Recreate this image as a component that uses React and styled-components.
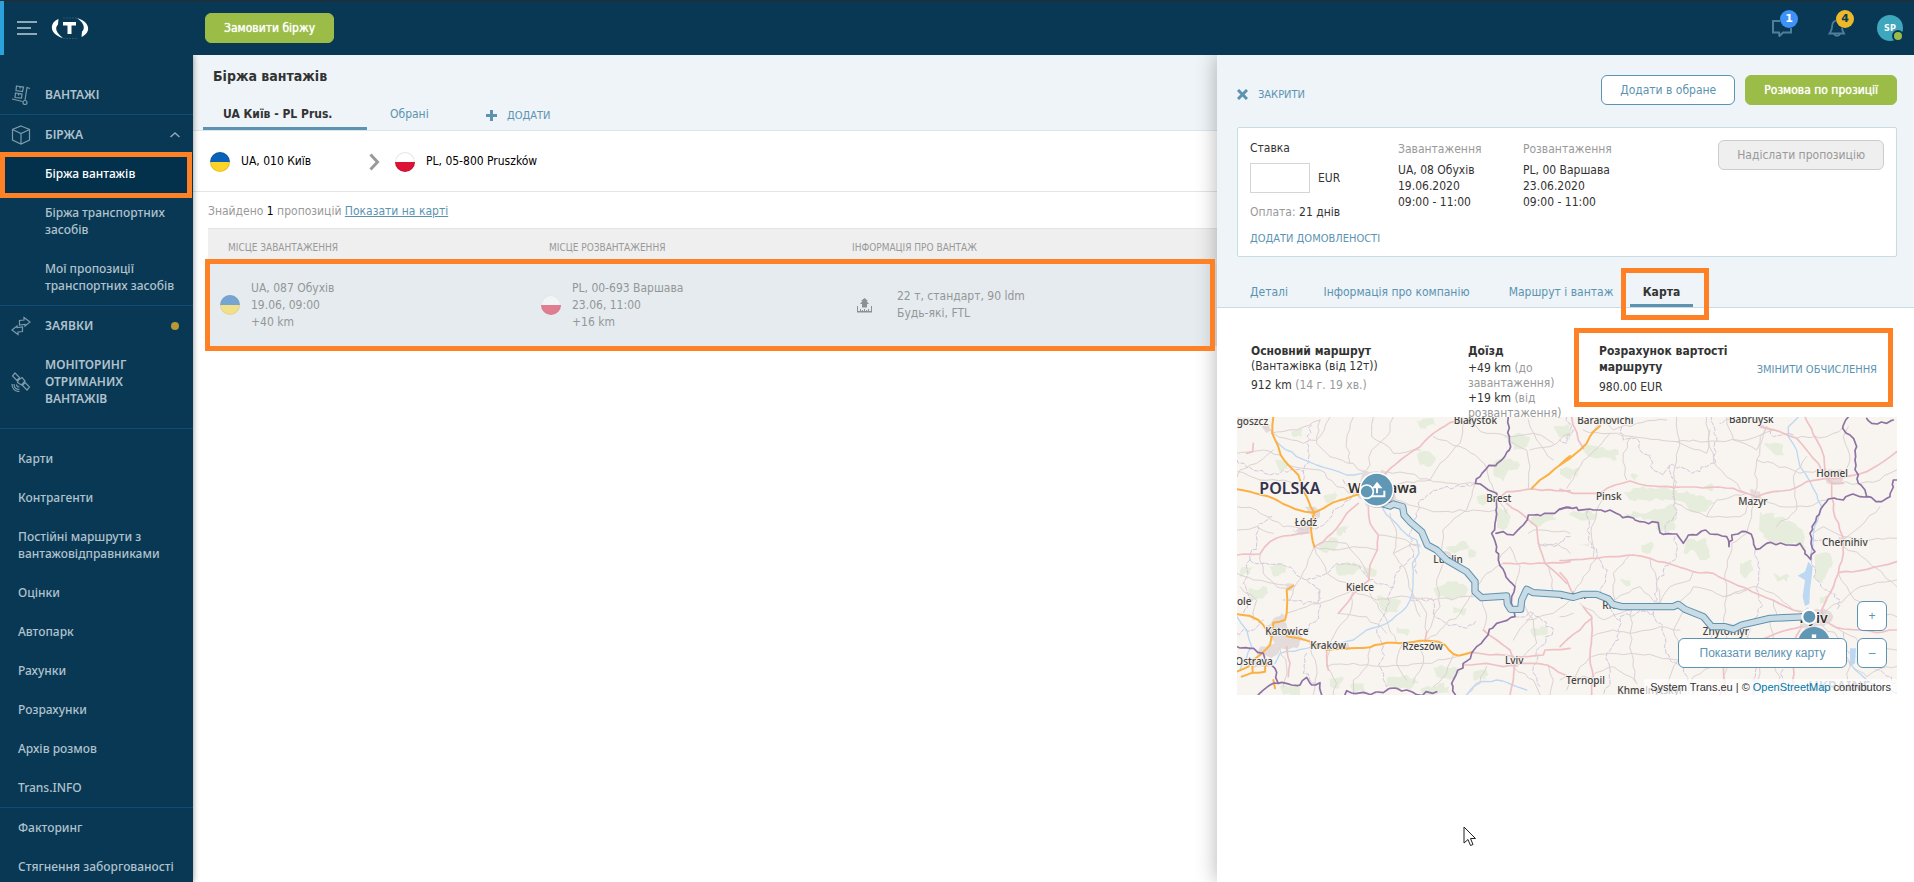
import React from "react";
import styled, { createGlobalStyle, css } from "styled-components";

const UI_FONT = '"DejaVu Sans Condensed", "Noto Sans", sans-serif';
const NAV_FONT = '"Noto Sans", sans-serif';
const ARIAL = '"Liberation Sans", sans-serif';

const color = {
  navy: "#093855",
  navyDark: "#03304a",
  navyLine: "#0f4d75",
  pale: "#eef4f7",
  line: "#c9dce6",
  blue: "#5b93b1",
  green: "#9bbd47",
  orange: "#ff8126",
  text: "#333333",
  muted: "#999999",
};

const GlobalStyle = createGlobalStyle`
  *, *::before, *::after { box-sizing: border-box; }
  html, body { margin: 0; background: #ffffff; }
  body { font: 12px/17px ${UI_FONT}; color: ${color.text}; }
  button, input { font: inherit; color: inherit; margin: 0; }
  button { border: 0; padding: 0; background: none; cursor: pointer; }
  ul, dl, dd, h1, h2, p { margin: 0; padding: 0; }
  ul { list-style: none; }
  svg { display: block; flex: none; }
`;

const highlight = (inset) => css`
  position: relative;
  &::after {
    content: "";
    position: absolute;
    inset: ${inset};
    border: 5px solid ${color.orange};
    pointer-events: none;
    z-index: 3;
  }
`;

/* ---------- frame ---------- */

const Page = styled.div`
  display: flex;
  flex-direction: column;
  height: 100vh;
  overflow: hidden;
`;

const TopBar = styled.header`
  display: flex;
  align-items: center;
  flex: none;
  height: 55px;
  padding-right: 11px;
  border-top: 1px solid #2b2b2b;
  background: ${color.navy};
  position: relative;
  z-index: 4;
`;

const Brand = styled.div`
  display: flex;
  align-items: center;
  align-self: stretch;
  gap: 14px;
  width: 205px;
  padding-left: 13px;
  border-left: 4px solid #2ba2de;
`;

const Spacer = styled.div`
  flex: 1;
`;

const TopIcons = styled.div`
  display: flex;
  align-items: center;
`;

const TopIconButton = styled.button`
  position: relative;
  width: 20px;
  height: 20px;
  margin-right: ${(p) => p.$gap}px;
`;

const Badge = styled.span`
  position: absolute;
  left: 8px;
  top: -8px;
  width: 18px;
  height: 18px;
  border-radius: 50%;
  background: ${(p) => p.$bg};
  color: ${(p) => p.$fg};
  font: bold 11px/18px "DejaVu Sans", sans-serif;
  text-align: center;
`;

const Avatar = styled.button`
  position: relative;
  width: 26px;
  height: 26px;
  border-radius: 50%;
  background: #3ea6bd;
  color: #ffffff;
  font-size: 9px;
  font-weight: bold;
  line-height: 26px;
  text-align: center;
  &::after {
    content: "";
    position: absolute;
    right: -1px;
    bottom: -1px;
    width: 12px;
    height: 12px;
    border: 2px solid ${color.navy};
    border-radius: 50%;
    background: ${color.green};
  }
`;

const Columns = styled.div`
  display: flex;
  flex: 1;
  min-height: 0;
`;

/* ---------- buttons ---------- */

const Button = styled.button`
  height: 30px;
  padding: 0 18px;
  border-radius: 6px;
  border: 1px solid ${color.green};
  background: ${color.green};
  color: #ffffff;
  line-height: 28px;
  white-space: nowrap;
  text-shadow: 0 0 1px #ffffff;
  ${(p) =>
    p.$kind === "outline" &&
    css`
      border-color: ${color.blue};
      background: #ffffff;
      color: ${color.blue};
      text-shadow: none;
    `}
  &:disabled {
    border-color: #cccccc;
    background: #efefef;
    color: ${color.muted};
    text-shadow: none;
  }
`;

const TextLink = styled.a`
  color: ${color.blue};
  text-decoration: ${(p) => (p.$underline ? "underline" : "none")};
  font-size: ${(p) => (p.$small ? 11 : 12)}px;
  white-space: nowrap;
`;

/* ---------- sidebar ---------- */

const Sidebar = styled.nav`
  flex: none;
  width: 193px;
  padding-top: 20px;
  background: ${color.navy};
  box-shadow: 0 0 6px rgba(0, 0, 0, 0.45);
  position: relative;
  z-index: 2;
`;

const NavSection = styled.ul`
  padding: ${(p) => p.$top ?? 0}px 0 ${(p) => p.$bottom ?? 0}px;
  border-bottom: 1px solid ${(p) => (p.$last ? "transparent" : color.navyLine)};
`;

const NavLink = styled.a`
  display: flex;
  align-items: center;
  padding: 11px 12px 11px ${(p) => p.$indent ?? 18}px;
  color: #b0c2cc;
  font-family: ${NAV_FONT};
  font-weight: ${(p) => (p.$caps ? 600 : 500)};
  text-decoration: none;
  ${(p) =>
    p.$active &&
    css`
      background: ${color.navyDark};
      color: #ffffff;
      ${highlight("-2px 1px -5px 0")}
    `}
`;

const NavIcon = styled.span`
  display: flex;
  align-items: center;
  width: 34px;
  height: 17px;
  margin-left: -7px;
  color: #7b99a9;
`;

const NavText = styled.span`
  flex: 1;
  text-transform: ${(p) => (p.$caps ? "uppercase" : "none")};
`;

const Dot = styled.span`
  width: 8px;
  height: 8px;
  margin-right: 2px;
  border-radius: 50%;
  background: #b79a36;
`;

/* ---------- main ---------- */

const Main = styled.main`
  flex: 1;
  min-width: 0;
  background: #ffffff;
`;

const MainHead = styled.div`
  height: 76px;
  padding: 12px 10px 0;
  border-bottom: 1px solid #dbe6ec;
  background: ${color.pale};
`;

const Title = styled.h1`
  padding-left: 10px;
  font-size: 14px;
  line-height: 18px;
`;

const TabRow = styled.div`
  display: flex;
  margin-top: 12px;
`;

const MainTab = styled.button`
  width: ${(p) => p.$width}px;
  height: 33px;
  padding: 5px 0 0 ${(p) => p.$pad}px;
  border-bottom: 3px solid ${(p) => (p.$active ? color.blue : "transparent")};
  color: ${(p) => (p.$active ? color.text : color.blue)};
  font-weight: ${(p) => (p.$active ? "bold" : "normal")};
  text-align: left;
`;

const AddTab = styled.button`
  display: flex;
  align-items: center;
  gap: 10px;
  height: 33px;
  padding-top: 3px;
  color: ${color.blue};
  font-size: 11px;
  text-transform: uppercase;
`;

const Filter = styled.div`
  display: flex;
  align-items: center;
  height: 61px;
  padding: 1px 0 0 17px;
  border-bottom: 1px solid #e0e5e9;
  color: #000000;
`;

const Flag = styled.span`
  flex: none;
  width: 20px;
  height: 20px;
  margin-right: 11px;
  border-radius: 50%;
  background: linear-gradient(${(p) => p.$top} 50%, ${(p) => p.$bottom} 50%);
  box-shadow: inset 0 0 0 1px rgba(0, 0, 0, 0.1);
  opacity: ${(p) => (p.$faded ? 0.5 : 1)};
`;

const FilterPlace = styled.span`
  display: flex;
  align-items: center;
  min-width: ${(p) => p.$min ?? 0}px;
`;

const Results = styled.section`
  padding: 11px 0 0 15px;
`;

const Found = styled.p`
  color: ${color.muted};
  strong { color: #000000; font-weight: normal; }
`;

const OffersFrame = styled.div`
  margin-top: 8px;
  ${highlight("31px 2px -5px -3px")}
`;

const Offers = styled.table`
  width: 100%;
  border-spacing: 0;
  table-layout: fixed;
`;

const HeadCell = styled.th`
  height: 36px;
  padding: 2px 0 0 20px;
  border-top: 1px solid #dfe5e9;
  background: #efefef;
  color: ${color.muted};
  font-size: 10px;
  font-weight: normal;
  text-align: left;
  text-transform: uppercase;
`;

const Cell = styled.td`
  height: 82px;
  padding: 0 0 0 ${(p) => p.$pad ?? 12}px;
  background: #e5ebee;
  color: #939799;
`;

const CellInner = styled.div`
  display: flex;
  align-items: center;
  gap: ${(p) => p.$gap ?? 0}px;
`;

/* ---------- detail drawer ---------- */

const Drawer = styled.aside`
  flex: none;
  width: 697px;
  background: #ffffff;
  box-shadow: 0 0 20px rgba(0, 0, 0, 0.3);
  position: relative;
  z-index: 1;
`;

const DrawerHead = styled.div`
  padding: 20px 17px 0 20px;
  border-bottom: 1px solid ${color.line};
  background: ${color.pale};
`;

const DrawerActions = styled.div`
  display: flex;
  align-items: center;
  gap: 10px;
`;

const CloseButton = styled.button`
  display: flex;
  align-items: center;
  gap: 10px;
  margin-right: auto;
  padding-top: 8px;
  color: ${color.blue};
  font-size: 11px;
  text-transform: uppercase;
`;

const OfferCard = styled.section`
  display: flex;
  align-items: flex-start;
  height: 130px;
  margin-top: 22px;
  padding: 12px;
  border: 1px solid ${color.line};
  border-radius: 2px;
  background: #ffffff;
`;

const RateColumn = styled.div`
  display: flex;
  flex-direction: column;
  align-items: flex-start;
  width: 148px;
`;

const RateRow = styled.div`
  display: flex;
  align-items: center;
  gap: 8px;
  margin: 6px 0 11px;
`;

const RateInput = styled.input`
  width: 60px;
  height: 30px;
  padding: 0 8px;
  border: 1px solid #d5d5d5;
  background: #ffffff;
`;

const Muted = styled.span`
  color: ${color.muted};
`;

const Payment = styled.p`
  margin-bottom: 9px;
`;

const Stop = styled.dl`
  width: ${(p) => p.$width}px;
  padding-top: 1px;
  line-height: 16px;
  dt { margin-bottom: 5px; color: ${color.muted}; }
`;

const CardButton = styled.div`
  margin-left: auto;
`;

const DrawerTabs = styled.div`
  display: flex;
  margin-top: 20px;
`;

const DrawerTab = styled.button`
  width: ${(p) => p.$width}px;
  height: 30px;
  padding-top: 4px;
  border-bottom: 3px solid ${(p) => (p.$active ? color.blue : "transparent")};
  color: ${(p) => (p.$active ? color.text : color.blue)};
  font-weight: ${(p) => (p.$active ? "bold" : "normal")};
  white-space: nowrap;
  ${(p) => p.$active && highlight("-9px -16px -16px -9px")}
`;

const Facts = styled.div`
  display: grid;
  grid-template-columns: 217px 106px 1fr;
  align-items: start;
  padding: 20px 21px 0 34px;
  position: relative;
  z-index: 1;
`;

const Fact = styled.div`
  padding-top: 15px;
  line-height: 15px;
`;

const FactTitle = styled.h2`
  font-size: 12px;
  line-height: 16px;
`;

const FactLine = styled.p`
  margin-top: ${(p) => p.$gap ?? 0}px;
  white-space: ${(p) => (p.$nowrap ? "nowrap" : "normal")};
`;

const Cost = styled.div`
  display: flex;
  align-items: center;
  height: 79px;
  padding: 4px 16px 0 25px;
  ${highlight("0")}
`;

const CostText = styled.div`
  flex: 1;
`;

/* ---------- map ---------- */

const MapBox = styled.section`
  position: relative;
  height: 278px;
  margin: -4px 17px 0 20px;
  overflow: hidden;
  background: #f8f4f0;
`;

const MapSvg = styled.svg`
  width: 100%;
  height: 100%;
`;

const MapControls = styled.div`
  position: absolute;
  right: 10px;
  bottom: 27px;
  display: flex;
  align-items: flex-end;
  gap: 10px;
  font-family: ${ARIAL};
`;

const ZoomButtons = styled.div`
  display: flex;
  flex-direction: column;
  gap: 7px;
`;

const MapButton = styled.button`
  width: ${(p) => p.$width}px;
  height: 30px;
  border: 1px solid ${color.blue};
  border-radius: 6px;
  background: #ffffff;
  color: ${color.blue};
`;

const Attribution = styled.p`
  position: absolute;
  right: 0;
  bottom: 0;
  height: 16px;
  padding: 0 6px;
  background: rgba(255, 255, 255, 0.7);
  font: 11px/16px ${ARIAL};
  white-space: nowrap;
  a { color: #0078a8; text-decoration: none; }
`;

const Pointer = styled.svg`
  position: absolute;
  left: 246px;
  top: 771px;
`;

/* Adds small deterministic bends to a coarse polyline, so that roads and borders look surveyed. */
function wiggle(points, amp, step = 22) {
  const n = points.trim().split(/\s+/).map(Number);
  let seed = Math.abs(n[0] * 31 + n[1] * 17 + n.length) + 7;
  const rnd = () => {
    seed = (seed * 16807) % 2147483647;
    return seed / 2147483647 - 0.5;
  };
  let d = `M${n[0]} ${n[1]}`;
  for (let i = 2; i < n.length; i += 2) {
    const [x0, y0, x1, y1] = [n[i - 2], n[i - 1], n[i], n[i + 1]];
    const parts = Math.max(1, Math.round(Math.hypot(x1 - x0, y1 - y0) / step));
    for (let k = 1; k <= parts; k++) {
      const t = k / parts;
      const j = k === parts ? 0 : amp;
      d += `L${Math.round(x0 + (x1 - x0) * t + rnd() * j)} ${Math.round(y0 + (y1 - y0) * t + rnd() * j)}`;
    }
  }
  return d;
}

const west = {
  forest: [
    "590 165 630 155 648 175 630 200 600 195", "820 190 870 175 900 195 860 220 850 245 820 225", "850 110 900 100 930 110 920 140 880 150 870 120",
    "1000 80 1050 70 1050 120 1020 115", "165 180 200 185 210 210 180 215", "590 60 640 55 650 75 600 85", "830 325 865 325 868 360 850 390 832 385",
    "935 350 1000 340 1010 360 960 380 930 375", "770 290 800 290 800 310 775 310", "670 440 740 425 750 445 700 460", "745 450 770 455 765 470 745 468",
    "300 425 350 415 350 440 320 460 295 445", "345 490 400 485 430 500 400 525 350 520", "430 500 470 510 465 530 430 525", "640 565 700 545 740 560 735 590 690 600 650 590",
    "470 590 540 600 535 635 500 640 480 620", "530 680 570 690 560 710 530 700", "150 500 190 490 195 520 160 530", "85 570 140 560 145 580 90 600",
    "60 510 100 500 90 520 60 530", "500 835 560 825 600 850 570 870 500 860", "600 870 660 850 690 860 690 884 610 884", "390 855 430 850 440 875 400 880",
    "330 835 370 830 360 860 330 860", "640 800 700 800 720 820 690 840 650 830", "760 815 800 810 800 840 760 840", "180 860 240 855 240 884 190 884",
    "310 290 350 270 345 300 320 310", "350 390 385 380 380 400 350 405", "215 90 250 85 245 110 215 105", "700 620 740 625 735 645 700 640", "930 690 980 680 985 700 940 710",
  ],
  urban: ["125 80 150 75 160 95 140 100", "255 320 290 325 300 350 270 365 235 385 230 400 270 400 285 360", "430 210 500 215 530 260 520 320 440 320 410 280", "135 690 170 650 185 640 200 680 250 715 230 745 180 745 160 770 110 765 120 740 165 730", "385 730 350 730 340 745 390 750", "80 780 140 775 150 800 100 805", "655 455 690 455 695 480 660 480", "870 770 895 770 895 800 872 800", "200 550 222 552 215 572 198 570"],
  minor: [
    "155 100 230 90 300 60", "160 95 100 60 51 55", "160 150 110 190 60 210 51 230", "300 60 290 130 330 170 400 190 430 215", "51 160 130 150 180 165", "245 260 190 240 120 240 51 215",
    "330 51 300 110 250 130 215 120 160 100", "400 51 380 120 390 190", "460 51 455 110 520 160 600 150", "520 51 500 110 455 150 440 210", "500 215 560 220 640 245 700 250 766 250",
    "640 110 720 140 780 180 800 205", "735 60 720 130 660 190 630 240 560 245 500 260", "740 60 800 100 865 110 940 100 1000 130", "868 120 920 150 930 200 925 265", "800 205 830 290 860 340",
    "930 150 990 140 1050 100", "925 60 950 120 1000 180", "766 250 740 330 690 370 668 390 665 450", "530 300 590 320 660 335 760 330 828 330", "510 340 530 400 520 460 560 520 580 600 600 650",
    "475 405 540 415 600 440", "283 440 340 450 400 440 470 450", "283 440 260 500 230 550 210 600", "283 440 320 520 400 560", "51 390 110 380 160 400", "120 462 130 520 170 560 200 565",
    "51 520 100 540 200 555", "200 640 260 620 330 600 400 570", "400 570 470 600 560 590 640 600 760 590", "400 570 390 640 350 690 320 745", "450 580 500 660 530 730", "355 640 440 650 500 700",
    "577 580 620 640 620 695", "680 480 650 540 660 620 620 700", "765 575 720 640 660 690 620 720", "785 593 800 650 790 690", "600 435 560 440 520 460", "310 425 380 430 420 480 447 540",
    "270 725 290 800 280 884", "330 750 320 800 350 850 340 884", "450 745 440 800 400 840 400 884", "545 735 530 790 560 840", "600 725 610 790 580 850", "700 765 680 820 640 860", "320 800 400 790 500 800 620 790 710 770",
    "100 660 110 600 60 560", "180 745 200 800 190 860", "885 560 900 500 870 440 835 480", "905 605 940 660 950 730 890 780", "850 490 800 520 770 560", "940 640 880 720", "1050 600 1000 640 920 660",
    "925 400 960 390 1050 400", "958 440 1010 430 1050 460", "800 800 780 850 740 884", "880 800 940 840 960 884", "985 795 1000 840 990 884", "1000 580 990 520 975 490", "51 320 110 330 190 380 240 385", "200 195 300 210 350 260 420 290",
  ],
  region: [
    "275 75 260 130 265 180 250 215 245 250", "370 240 400 260 390 300 340 330 300 380 220 390", "51 180 100 210 150 225 190 210 250 215", "590 350 600 300 640 270 720 260 766 250", "590 350 570 410 580 470 540 500",
    "90 480 110 430 120 370 160 350", "90 480 70 550 100 600 70 640", "90 480 200 500 260 540 300 570 290 610 190 600", "260 540 320 520 350 490 420 500 450 540 520 560 540 500", "520 560 500 620 470 690 490 740",
    "490 740 480 800 500 860", "640 640 680 670 740 685 770 660", "570 600 640 600 640 640", "300 570 290 660 250 700", "590 520 580 470", "885 650 940 640 1000 690 960 740 940 800 960 860", "1050 410 1000 440 950 430",
    "51 700 100 690 130 660", "260 760 250 820 290 850",
  ],
  primary: [
    "495 222 530 190 600 140 640 100 690 68 735 58", "415 310 380 340 350 385 310 425 283 440", "445 320 450 370 475 405 472 450 450 495 447 540 410 570 385 605 355 640", "51 465 120 462 150 425 190 408 265 398",
    "840 292 860 275 920 268 1050 272", "860 310 910 345 950 380 958 440 975 490 1010 520 1040 550", "850 490 975 490 1050 485", "790 690 830 720 870 750 885 780 880 840 870 884", "730 795 800 790 850 800 930 790 980 795 1050 835",
    "890 770 970 765 975 750 1050 745", "620 695 615 725", "100 130 98 155 80 160", "755 757 790 762 850 765 890 775", "200 740 210 790 205 830", "320 755 325 810",
  ],
  motorway: [
    "160 51 157 100 175 140 182 165 205 195 235 225 245 260 260 290 272 320 283 338 272 375 275 405 283 440", "51 268 90 275 125 285 160 295 190 312 225 327 255 335 283 338 310 325 340 307 375 297 415 283",
    "1050 168 1020 195 990 220 960 240 935 265", "220 557 200 570 202 600 200 640 195 660 160 668 155 710", "51 643 90 648 115 660 140 690 155 710 150 735 120 765 100 780 85 800 51 815",
    "200 708 235 715 270 725 320 750 390 745 450 742 465 735 500 728 540 730 600 722 655 725 675 735 700 762 715 767 755 757", "140 780 135 815 98 818 65 830", "98 780 98 818", "160 840 165 865",
  ],
  river: ["155 95 180 135 230 170 290 195 380 225 425 220", "485 310 500 345 545 390 590 420 597 460 577 490 577 580 560 620 500 670 440 690 400 720 350 735 260 745 180 760 165 790", "51 650 80 690 95 740 60 810", "740 884 770 850 830 840 890 860 920 870"],
  border: [
    "865 51 868 150 845 180 800 205 780 230 766 250 805 270 830 280 828 330 825 370 815 400 830 440 835 480 855 520 885 560 875 590 885 650 830 670 755 760 695 850 706 884", "828 400 850 395 880 405 910 375 925 345 990 340 1050 322",
    "51 740 90 745 130 760 140 790 165 805 175 850 150 855 115 884", "175 850 215 855 240 855 260 832 275 855 300 848 305 884", "375 884 380 872 440 880 490 878 510 865 560 870 590 884 650 875",
  ],
};

const east = {
  forest: [
    "65 145 90 135 140 150 175 150 170 180 120 175 85 170", "190 275 270 262 330 270 400 280 440 300 465 310 430 335 390 335 370 305 330 300 260 300 210 300", "285 325 345 315 345 390 300 395 280 360 200 350 190 335 260 340",
    "20 340 90 330 110 355 60 360", "600 335 660 350 710 375 735 410 740 445 700 430 640 430 610 410 598 370", "540 490 575 480 580 510 560 535 540 520", "245 435 280 430 270 460 245 455", "380 420 440 420 450 470 420 480 400 450 370 460",
    "610 130 670 135 675 165 640 160 630 150", "0 205 60 205 55 230 20 235 0 225", "765 465 810 460 815 500 790 550 765 540", "640 520 690 530 680 545 650 540", "60 430 90 425 85 440", "780 590 800 585 795 610 780 610",
    "430 260 460 255 455 275", "210 225 235 225 225 245", "700 780 735 775 740 800 700 800", "550 840 600 830 590 850", "180 540 210 540 200 560",
  ],
  urban: ["720 630 790 625 820 650 790 680 720 690", "790 205 850 210 845 250 800 250", "570 270 600 275 595 300 575 298", "470 670 520 672 515 700 475 695", "835 410 860 412 858 440 838 438"],
  minor: [
    "70 90 150 100 220 110 350 125 440 125", "140 51 160 90 230 70 320 60", "100 95 130 60", "215 110 190 160 200 240", "350 51 358 120 340 260", "440 51 445 120 470 200 560 280", "350 125 440 160 450 90", "150 100 60 200 20 265",
    "500 51 520 120 590 150 620 80", "620 80 590 180 585 280", "440 125 560 120 640 90", "590 290 575 350 560 400 515 430 495 520 500 590 490 670", "590 290 660 320 740 320 800 300", "590 290 540 350 440 350 345 310 340 265",
    "710 115 800 110 850 80", "795 210 720 220 640 190 590 180", "850 232 870 180 850 110 865 80", "820 250 900 250 960 240 1010 210", "848 410 930 420 1010 415", "848 420 900 380 960 320", "848 410 790 380 760 400", "850 440 920 480 1010 560",
    "835 520 870 580 930 640 1010 650", "790 640 860 590 900 560 1010 540", "140 280 110 330 95 380 100 470", "210 465 160 520 165 600", "110 475 70 530 40 580", "270 475 290 540 300 610", "300 610 330 560 390 540 400 515", "350 620 400 560 490 590 560 570",
    "375 628 340 690 360 760 330 830 300 884", "215 630 210 700 215 760 230 850", "60 610 130 660 215 630", "95 710 160 690 210 700 300 680 360 690", "215 760 150 760 95 770", "215 760 290 770 360 780 430 740 470 690", "95 830 160 800 230 850",
    "20 870 60 800 90 770", "500 700 510 760 490 830 495 884", "430 740 480 790 560 800 640 790", "545 680 590 740 600 820 580 884", "630 660 640 720 700 760", "640 790 660 830 660 884", "690 740 760 780 850 770 920 830", "790 680 850 720 870 800 850 884",
    "830 683 900 730 1010 750", "700 630 640 580 580 560 490 590", "640 600 650 650", "480 790 400 830 370 884", "920 830 980 800 1010 800", "0 650 40 640", "0 840 40 830 90 835", "740 170 700 230 710 330 650 380", "440 350 470 300 560 280", "165 600 240 560 300 610",
  ],
  region: [
    "20 51 40 90 20 130 0 120", "185 80 190 120 230 115 250 160 270 165 280 210 310 225 330 195 360 200 395 220 440 200 465 190 470 110 455 51", "330 195 345 260 340 320 350 340 320 370 320 400", "85 330 80 390 95 430 120 480 140 520 120 570 150 620 175 660",
    "345 410 350 470 310 510 290 560 280 640 230 640 180 650 175 720 140 760 150 840 130 884", "280 640 310 700 330 780 370 800 400 884", "585 450 600 510 590 560 605 620 570 680 560 730 590 800 580 884", "670 884 660 820 700 770 640 720",
    "755 478 770 540 800 570 840 600 830 630", "760 420 785 420", "850 700 870 760 930 790 1010 850", "560 51 600 60 640 110 700 105", "530 51 480 70",
  ],
  primary: [
    "0 268 40 280 120 280 165 255 210 243 260 257 340 262 450 262 520 265 560 280 590 290 640 275 690 270 740 245 800 235 850 232 920 215 970 185 1010 155", "600 80 660 95 710 115 740 150 775 190 790 225 820 250 850 250", "735 51 770 120 792 170 795 210",
    "815 250 820 330 848 410 850 460 835 520 810 580 785 630 790 660", "0 482 110 475 220 465 270 475 340 495 400 515 460 520 510 545 600 585 700 630 740 645", "835 518 900 512 960 498 1010 485", "790 660 830 683 900 690 950 698 1010 690", "0 518 20 540 35 575",
    "70 620 95 650 95 710 90 770 100 830 95 884", "95 655 60 690 20 720 0 740", "720 690 690 740 700 800 700 884", "35 51 55 120 70 145", "490 800 495 850 480 884", "725 680 650 700 600 720",
  ],
  motorway: ["120 78 100 95 80 130 60 150 30 175 0 195"],
  river: ["715 51 685 80 685 110 710 150 720 200 750 245 785 320 760 400 752 480", "870 790 920 840 1010 880"],
  border: [
    "0 328 20 322 100 330 150 330 180 345 240 365 295 368 300 398 350 402 370 430 385 405 410 405 437 390 450 402 500 410 507 440 515 405 558 395 580 420 588 448 620 430 690 435 720 430 735 462 752 478 765 455 750 400 770 350 805 297 850 300 870 285 925 290 965 305 990 290 1000 240 1010 240",
    "865 51 848 85 870 105 890 140 885 180 895 250 915 270 920 290", "920 55 935 70 980 70 1000 60",
  ],
};

const westCities = [
  ["goszcz", 50, 74], ["Białystok", 701, 72], ["Łódź", 224, 377], ["Brest", 799, 305], ["Lublin", 640, 490], ["Kielce", 378, 572], ["ole", 51, 616],
  ["Katowice", 136, 704], ["Kraków", 271, 746], ["Ostrava", 46, 795], ["Rzeszów", 547, 751], ["Lviv", 855, 793], ["Lutsk", 1020, 598],
];
const eastCities = [
  ["Baranovichi", 52, 71], ["Babruysk", 507, 68], ["Homel", 769, 231], ["Pinsk", 108, 300], ["Mazyr", 535, 315], ["Chernihiv", 786, 437],
  ["Rivne", 127, 627], ["Zhytomyr", 428, 704], ["Ternopil", 18, 853], ["Khmelnytskyi", 172, 882],
];

const route =
  "M490 312L510 318L520 312L548 320L552 345L570 365L605 395L622 435L650 450L680 480L740 515L765 545L765 575L785 593L860 588L862 612L872 628L902 628L905 600L920 568L940 578L1020 583L1060 592L1090 583L1130 583L1165 597L1178 613L1205 620L1360 620L1375 613L1395 628L1450 650L1475 680L1515 680L1540 688L1565 675L1650 655L1765 650";

function Lines({ data, amp, step, ...rest }) {
  return (
    <g fill="none" strokeLinejoin="round" strokeLinecap="round" {...rest}>
      {data.map((p) => (
        <path key={p} d={wiggle(p, amp, step)} />
      ))}
    </g>
  );
}

function MapSheet({ sheet, cities, x }) {
  return (
    <g transform={`translate(${x} -51)`}>
      <g fill="#e6eddc">
        {sheet.forest.map((p) => (
          <path key={p} d={wiggle(p, 14, 12) + "Z"} />
        ))}
      </g>
      <g fill="#e4dcda">
        {sheet.urban.map((p) => (
          <path key={p} d={wiggle(p, 12, 12) + "Z"} />
        ))}
      </g>
      <Lines data={sheet.region} amp={14} step={12} stroke="#d3c8de" strokeWidth="3" strokeDasharray="12 6" />
      <Lines data={sheet.minor} amp={10} step={20} stroke="#dcd2d2" strokeWidth="3" />
      <Lines data={sheet.river} amp={7} stroke="#bcd8f3" strokeWidth="4" />
      <Lines data={sheet.primary} amp={5} stroke="#efc1c5" strokeWidth="5" />
      <Lines data={sheet.motorway} amp={3} stroke="#fcb042" strokeWidth="6" />
      <Lines data={sheet.border} amp={10} step={14} stroke="#8d72a2" strokeWidth="5" />
      <g fontSize="30" fill="#444444" stroke="#f8f4f0" strokeWidth="5" paintOrder="stroke" fontWeight="500">
        {cities.map(([name, cx, cy]) => (
          <text key={name} x={cx} y={cy}>{name}</text>
        ))}
      </g>
    </g>
  );
}

function RouteMap() {
  return (
    <MapSvg viewBox="0 0 1980 834" preserveAspectRatio="xMinYMin slice" fontFamily='"Noto Sans", sans-serif' role="img" aria-label="Варшава — Київ">
      <MapSheet sheet={west} cities={westCities} x={-51} />
      <MapSheet sheet={east} cities={eastCities} x={969} />
      <g transform="translate(-51 -51)">
        <path d="M1765 485L1778 500L1775 530L1770 570L1768 612L1755 618L1748 590L1755 540L1733 527L1755 515ZM1890 745L1908 745L1905 790L1890 800Z" fill="#bcd8f3" />
        <g stroke="#f8f4f0" strokeWidth="5" paintOrder="stroke" fontWeight="600">
          <text x="118" y="283" fontSize="48" fill="#33334d">POLSKA</text>
          <text x="384" y="278" fontSize="42" fill="#333333">Warszawa</text>
          <text x="1738" y="668" fontSize="42" fill="#333333">Kyiv</text>
          <text x="1765" y="872" fontSize="42" fill="#8a8a99">UKRAINE</text>
        </g>
        <g fill="none" strokeLinejoin="round">
          <path d={route} stroke="#5b93b1" strokeWidth="22" />
          <path d={route} stroke="#c9dce6" strokeWidth="16" />
        </g>
        <g fill="#5f97b5" stroke="#ffffff">
          <circle cx="473" cy="273" r="51" fill="#000000" opacity=".2" stroke="none" />
          <circle cx="470" cy="269" r="50" strokeWidth="5" />
          <path d="M454 289H493V272M471 280V256M462 262L471 250L481 262Z" fill="none" strokeWidth="6" />
          <circle cx="440" cy="275" r="20" strokeWidth="5" />
          <circle cx="1782" cy="728" r="47" strokeWidth="0" />
          <rect x="1776" y="704" width="12" height="20" fill="#ffffff" />
          <circle cx="1768" cy="650" r="21" strokeWidth="6" />
        </g>
      </g>
    </MapSvg>
  );
}

/* ---------- icons ---------- */

const stroke = { fill: "none", stroke: "currentColor", strokeWidth: 1.2 };

const CartIcon = () => (
  <svg width="20" height="20" viewBox="0 0 20 20" {...stroke}>
    <path d="M5.500 1L12.500 2L11.500 6.500L5 5.500ZM9 1.500V3.500M4.500 8L11 9L10.500 13L4 12.500ZM7.500 8.500V10.500M19 3.500L16 2.500L14 15M1 14L11.500 16.500" />
    <circle cx="14" cy="17.500" r="2" />
  </svg>
);
const BoxIcon = () => (
  <svg width="20" height="20" viewBox="0 0 20 20" {...stroke}>
    <path d="M10 1L18.500 4.500V15L10 19L1.500 15V4.500ZM1.500 4.500L10 8.500L18.500 4.500M10 8.500V19" />
  </svg>
);
const SwapIcon = () => (
  <svg width="20" height="20" viewBox="0 0 20 20" {...stroke}>
    <path d="M8.500 9V4.500L13 4V1.500L19 6L14 10V8.500ZM11.500 11V15.500L7 16V18.500L1 14L6 10V11.500Z" />
  </svg>
);
const SatelliteIcon = () => (
  <svg width="20" height="20" viewBox="0 0 20 20" {...stroke}>
    <path d="M4 1L8.500 5.500L6 8.500L1.500 4ZM14 10.500L18.500 15L16 18L11.500 13.500ZM7.500 8L11 5.500L14 9L10.500 13L6.500 10.500ZM5.500 12.500C5.500 14 6.500 15 8.500 15M3 12C3 15.500 5 17.500 8.500 17.500M1 12C1 17 4 19.500 8.500 19.500" />
  </svg>
);
const MenuIcon = () => (
  <svg width="20" height="16" viewBox="0 0 20 16">
    <path d="M0 2H20M0 8H14M0 14H20" stroke="#8fa9b7" strokeWidth="2" />
  </svg>
);
const Logo = () => (
  <svg width="38" height="22" viewBox="0 0 38 22" fill="#ffffff">
    <path d="M7.500 2C-2 6 -2 17 12 21C5 16 3.500 11 7 7.500Z" />
    <path d="M30.500 20C40 16 40 5 26 1C33 6 34.500 11 31 14.500Z" />
    <path d="M12 5H25V8.500H20.500V17H16.500V8.500H12Z" />
    <path d="M12 1H26M12 21.500H26" stroke="#2c5570" strokeDasharray="2 1" />
  </svg>
);
const ChatIcon = () => (
  <svg width="20" height="18" viewBox="0 0 20 18" fill="none" stroke="#4d7f9b" strokeWidth="2">
    <path d="M8 2H1V13.500H7L7.500 17L11 13.500H19V9" />
  </svg>
);
const BellIcon = () => (
  <svg width="18" height="18" viewBox="0 0 18 18" fill="none" stroke="#4d7f9b" strokeWidth="1.800">
    <path d="M8 1.500C5 2.500 4 4.500 4 8C4 11 3 12 1.500 14.500H16C14.500 12 14 11 14 9M6 15C7 17.500 11 17.500 12 15" />
  </svg>
);
const ChevronUp = () => (
  <svg width="12" height="8" viewBox="0 0 12 8" fill="none" stroke="#8fa9b7" strokeWidth="1.500">
    <path d="M1.500 6L6 2L10.500 6" />
  </svg>
);
const ChevronRight = () => (
  <svg width="26" height="18" viewBox="0 0 26 18" fill="none" stroke="#999999" strokeWidth="3">
    <path d="M1.500 1.500L8.500 9L1.500 16.500" />
  </svg>
);
const PlusIcon = () => (
  <svg width="11" height="11" viewBox="0 0 11 11" stroke={color.blue} strokeWidth="3">
    <path d="M5.500 0V11M0 5.500H11" />
  </svg>
);
const CrossIcon = () => (
  <svg width="11" height="11" viewBox="0 0 11 11" stroke={color.blue} strokeWidth="3">
    <path d="M1 1L10 10M10 1L1 10" />
  </svg>
);
const LoadIcon = () => (
  <svg width="15" height="15" viewBox="0 0 15 15" fill="#8d9193">
    <path d="M7.500 0L11 3H9.500L12 6H10V9.500H5V6H3L5.500 3H4ZM0 8H1V13H14V8H15V14.500H0ZM3 11H4V13H3ZM5 12H6V13H5ZM7 11H8V13H7ZM9 12H10V13H9ZM11 11H12V13H11Z" />
  </svg>
);

const UaFlag = (p) => <Flag $top="#0a62b8" $bottom="#ffd429" {...p} />;
const PlFlag = (p) => <Flag $top="#ffffff" $bottom="#dc1237" {...p} />;

/* ---------- screens ---------- */

const products = ["Карти", "Контрагенти", "Постійні маршрути з вантажовідправниками", "Оцінки", "Автопарк", "Рахунки", "Розрахунки", "Архів розмов", "Trans.INFO"];
const finance = ["Факторинг", "Стягнення заборгованості"];

function NavItem({ label, icon, end, sub, active, caps }) {
  return (
    <li>
      <NavLink href="#" $indent={sub ? 45 : 18} $active={active} $caps={caps} aria-current={active ? "page" : undefined}>
        {icon && <NavIcon>{icon}</NavIcon>}
        <NavText $caps={caps}>{label}</NavText>
        {end}
      </NavLink>
    </li>
  );
}

function SideMenu() {
  return (
    <Sidebar aria-label="Меню">
      <NavSection>
        <NavItem caps label="Вантажі" icon={<CartIcon />} />
      </NavSection>
      <NavSection>
        <NavItem caps label="Біржа" icon={<BoxIcon />} end={<ChevronUp />} />
        <NavItem sub active label="Біржа вантажів" />
        <NavItem sub label={<>Біржа транспортних<br />засобів</>} />
        <NavItem sub label={<>Мої пропозиції<br />транспортних засобів</>} />
      </NavSection>
      <NavSection $bottom={10}>
        <NavItem caps label="Заявки" icon={<SwapIcon />} end={<Dot />} />
        <NavItem caps label={<>Моніторинг<br />отриманих<br />вантажів</>} icon={<SatelliteIcon />} />
      </NavSection>
      <NavSection $top={10}>
        {products.map((label) => <NavItem key={label} label={label} />)}
      </NavSection>
      <NavSection $last>
        {finance.map((label) => <NavItem key={label} label={label} />)}
      </NavSection>
    </Sidebar>
  );
}

function OfferList() {
  return (
    <Main>
      <MainHead>
        <Title>Біржа вантажів</Title>
        <TabRow>
          <MainTab $active $width={164} $pad={20}>UA Київ - PL Prus.</MainTab>
          <MainTab $width={119} $pad={23}>Обрані</MainTab>
          <AddTab><PlusIcon />Додати</AddTab>
        </TabRow>
      </MainHead>
      <Filter>
        <FilterPlace $min={159}><UaFlag />UA, 010 Київ</FilterPlace>
        <ChevronRight />
        <FilterPlace><PlFlag />PL, 05-800 Pruszków</FilterPlace>
      </Filter>
      <Results>
        <Found>
          Знайдено <strong>1</strong> пропозицій <TextLink href="#" $underline>Показати на карті</TextLink>
        </Found>
        <OffersFrame>
          <Offers>
            <colgroup>
              <col width="321" />
              <col width="303" />
              <col />
            </colgroup>
            <thead>
              <tr>
                <HeadCell>Місце завантаження</HeadCell>
                <HeadCell>Місце розвантаження</HeadCell>
                <HeadCell>Інформація про вантаж</HeadCell>
              </tr>
            </thead>
            <tbody>
              <tr>
                <Cell>
                  <CellInner><UaFlag $faded /><div>UA, 087 Обухів<br />19.06, 09:00<br />+40 km</div></CellInner>
                </Cell>
                <Cell>
                  <CellInner><PlFlag $faded /><div>PL, 00-693 Варшава<br />23.06, 11:00<br />+16 km</div></CellInner>
                </Cell>
                <Cell $pad={25}>
                  <CellInner $gap={25}><LoadIcon /><div>22 т, стандарт, 90 ldm<br />Будь-які, FTL</div></CellInner>
                </Cell>
              </tr>
            </tbody>
          </Offers>
        </OffersFrame>
      </Results>
    </Main>
  );
}

function OfferDrawer() {
  return (
    <Drawer>
      <DrawerHead>
        <DrawerActions>
          <CloseButton><CrossIcon />Закрити</CloseButton>
          <Button $kind="outline">Додати в обране</Button>
          <Button>Розмова по прозиції</Button>
        </DrawerActions>
        <OfferCard>
          <RateColumn>
            <label htmlFor="rate">Ставка</label>
            <RateRow><RateInput id="rate" type="text" />EUR</RateRow>
            <Payment><Muted>Оплата:</Muted> 21 днів</Payment>
            <TextLink href="#" $small>ДОДАТИ ДОМОВЛЕНОСТІ</TextLink>
          </RateColumn>
          <Stop $width={125}>
            <dt>Завантаження</dt>
            <dd>UA, 08 Обухів</dd><dd>19.06.2020</dd><dd>09:00 - 11:00</dd>
          </Stop>
          <Stop $width={125}>
            <dt>Розвантаження</dt>
            <dd>PL, 00 Варшава</dd><dd>23.06.2020</dd><dd>09:00 - 11:00</dd>
          </Stop>
          <CardButton><Button disabled>Надіслати пропозицію</Button></CardButton>
        </OfferCard>
        <DrawerTabs>
          <DrawerTab $width={64}>Деталі</DrawerTab>
          <DrawerTab $width={191}>Інформація про компанію</DrawerTab>
          <DrawerTab $width={138}>Маршрут і вантаж</DrawerTab>
          <DrawerTab $width={63} $active>Карта</DrawerTab>
        </DrawerTabs>
      </DrawerHead>
      <Facts>
        <Fact>
          <FactTitle>Основний маршрут</FactTitle>
          <FactLine>(Вантажівка (від 12т))</FactLine>
          <FactLine $gap={4}>912 km <Muted>(14 г. 19 хв.)</Muted></FactLine>
        </Fact>
        <Fact>
          <FactTitle>Доїзд</FactTitle>
          <FactLine $gap={2} $nowrap>+49 km <Muted>(до<br />завантаження)</Muted></FactLine>
          <FactLine $nowrap>+19 km <Muted>(від<br />розвантаження)</Muted></FactLine>
        </Fact>
        <Cost>
          <CostText>
            <FactTitle>Розрахунок вартості<br />маршруту</FactTitle>
            <FactLine $gap={4}>980.00 EUR</FactLine>
          </CostText>
          <TextLink href="#" $small>ЗМІНИТИ ОБЧИСЛЕННЯ</TextLink>
        </Cost>
      </Facts>
      <MapBox>
        <RouteMap />
        <MapControls>
          <MapButton $width={169}>Показати велику карту</MapButton>
          <ZoomButtons>
            <MapButton $width={30} aria-label="Збільшити">+</MapButton>
            <MapButton $width={30} aria-label="Зменшити">–</MapButton>
          </ZoomButtons>
        </MapControls>
        <Attribution>System Trans.eu | © <a href="#">OpenStreetMap</a> contributors</Attribution>
      </MapBox>
      <Pointer width="14" height="21" viewBox="0 0 14 21" aria-hidden="true">
        <path d="M1 1V17L5 13.500L7.500 19.500L10 18.500L7.500 12.500H12.500Z" fill="#ffffff" stroke="#222222" />
      </Pointer>
    </Drawer>
  );
}

export default function App() {
  return (
    <>
      <GlobalStyle />
      <Page>
        <TopBar>
          <Brand><MenuIcon /><Logo /></Brand>
          <Button>Замовити біржу</Button>
          <Spacer />
          <TopIcons>
            <TopIconButton $gap={36} aria-label="Повідомлення"><ChatIcon /><Badge $bg="#3d91f7" $fg="#ffffff">1</Badge></TopIconButton>
            <TopIconButton $gap={29} aria-label="Сповіщення"><BellIcon /><Badge $bg="#edb92b" $fg="#093855">4</Badge></TopIconButton>
            <Avatar>SP</Avatar>
          </TopIcons>
        </TopBar>
        <Columns>
          <SideMenu />
          <OfferList />
          <OfferDrawer />
        </Columns>
      </Page>
    </>
  );
}
